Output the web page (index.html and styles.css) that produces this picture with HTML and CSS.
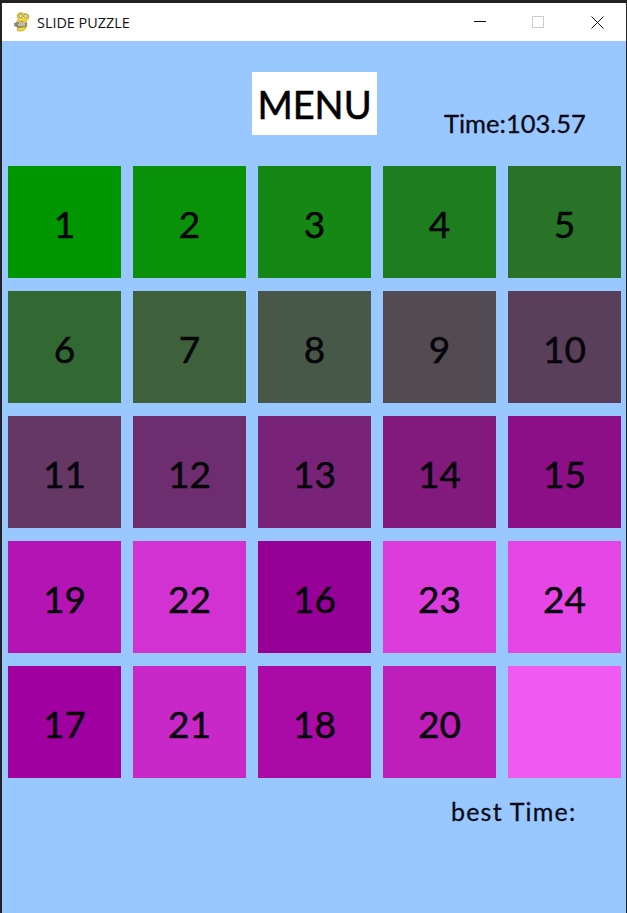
FILE: index.html
```html
<!DOCTYPE html>
<html lang="en">
<head>
<meta charset="utf-8">
<title>SLIDE PUZZLE</title>
<link rel="stylesheet" href="styles.css">
</head>
<body>
<div class="window">
  <header class="titlebar">
    <svg class="app-icon" width="18" height="20" viewBox="0 0 18 20">
      <path d="M6 1 C8 0 10 1 11 2 C13 1 16 2 16 5 C16 7 14 8 13 9 L14 12 C14 16 12 18 9 19 L5 19 C4 18 4 17 5 16 L4 12 C3 10 4 8 6 7 C4 6 3 3 6 1Z" fill="#f2d43a" stroke="#a98f1c" stroke-width=".6"/>
      <circle cx="7.5" cy="4" r="1.6" fill="#fff" stroke="#444" stroke-width=".5"/>
      <circle cx="12.5" cy="4" r="1.6" fill="#fff" stroke="#444" stroke-width=".5"/>
      <path d="M1 11 L9 9 L14 11 L13 15 L5 16 L1 14Z" fill="#77776a" opacity=".8"/>
      <path d="M6 11 H12 M5 13 H12" stroke="#eee" stroke-width="1"/>
    </svg>
    <span class="app-title">SLIDE PUZZLE</span>
    <div class="controls">
      <svg class="ctl" width="12" height="12" viewBox="0 0 12 12"><path d="M0 5.5H12" stroke="#111" stroke-width="1"/></svg>
      <svg class="ctl" width="12" height="12" viewBox="0 0 12 12"><rect x=".5" y=".5" width="11" height="11" fill="none" stroke="#ccc"/></svg>
      <svg class="ctl" width="13" height="13" viewBox="0 0 13 13"><path d="M.5 .5L12.5 12.5M12.5 .5L.5 12.5" stroke="#111" stroke-width="1"/></svg>
    </div>
  </header>
  <main class="game">
    <div class="top">
      <div class="menu">MENU</div>
      <div class="time">Time:103.57</div>
    </div>
    <div class="board">
      <div class="tile t1">1</div><div class="tile t2">2</div><div class="tile t3">3</div><div class="tile t4">4</div><div class="tile t5">5</div>
      <div class="tile t6">6</div><div class="tile t7">7</div><div class="tile t8">8</div><div class="tile t9">9</div><div class="tile t10">10</div>
      <div class="tile t11">11</div><div class="tile t12">12</div><div class="tile t13">13</div><div class="tile t14">14</div><div class="tile t15">15</div>
      <div class="tile t19">19</div><div class="tile t22">22</div><div class="tile t16">16</div><div class="tile t23">23</div><div class="tile t24">24</div>
      <div class="tile t17">17</div><div class="tile t21">21</div><div class="tile t18">18</div><div class="tile t20">20</div><div class="tile t25"></div>
    </div>
    <div class="best">best Time:</div>
  </main>
</div>
</body>
</html>
```
FILE: styles.css
```css
* { box-sizing: border-box; }
html, body { margin: 0; height: 100%; overflow: hidden; }
body { background: #222; font-family: "Comic Sans MS", "Lato", "Noto Sans", sans-serif; color: #0a0a14; }
.window { height: 913px; padding: 3px 1px 0 2px; display: flex; flex-direction: column; }
.titlebar { height: 38px; background: #fff; display: flex; align-items: center; padding-left: 11px; flex: none; }
.app-icon { flex: none; }
.app-title { font-family: "Open Sans", "Noto Sans", sans-serif; font-size: 14.4px; margin-left: 6px; color: #111; }
.controls { margin-left: auto; display: flex; align-items: center; }
.ctl { margin-right: 46px; }
.ctl:nth-child(2) { margin-right: 47px; }
.ctl:last-child { margin-right: 22px; }
.game { flex: 1; background: #99c7ff; padding: 31px 0 0 6px; }
.top { height: 94px; display: flex; align-items: flex-start; }
.menu { margin-left: 244px; width: 125px; height: 63px; background: #fff; color: #000; font-size: 38px; line-height: 64px; text-align: center; -webkit-text-stroke: 0.6px #000; }
.time { margin-left: 67px; margin-top: 33px; font-size: 25.5px; line-height: 36px; white-space: nowrap; -webkit-text-stroke: 0.3px #0a0a14; }
.board { display: grid; grid-template-columns: repeat(5, 113px); grid-auto-rows: 112px; gap: 13px 12px; }
.tile { display: flex; align-items: center; justify-content: center; padding-top: 3px; font-size: 37px; color: #05050a; -webkit-text-stroke: 0.5px #05050a; }
.best { margin: 16px 0 0 443px; font-size: 25px; line-height: 34px; letter-spacing: 1.2px; white-space: nowrap; -webkit-text-stroke: 0.3px #0a0a14; }
.t1 { background: rgb(0,150,0); }
.t2 { background: rgb(10,145,10); }
.t3 { background: rgb(20,135,20); }
.t4 { background: rgb(30,125,30); }
.t5 { background: rgb(40,115,40); }
.t6 { background: rgb(50,105,50); }
.t7 { background: rgb(62,97,60); }
.t8 { background: rgb(72,88,72); }
.t9 { background: rgb(82,75,82); }
.t10 { background: rgb(90,63,90); }
.t11 { background: rgb(100,55,100); }
.t12 { background: rgb(110,45,110); }
.t13 { background: rgb(120,35,120); }
.t14 { background: rgb(130,25,125); }
.t15 { background: rgb(140,15,135); }
.t16 { background: rgb(150,0,150); }
.t17 { background: rgb(160,0,160); }
.t18 { background: rgb(170,10,165); }
.t19 { background: rgb(180,20,180); }
.t20 { background: rgb(190,30,185); }
.t21 { background: rgb(200,40,200); }
.t22 { background: rgb(210,50,210); }
.t23 { background: rgb(220,60,220); }
.t24 { background: rgb(230,70,230); }
.t25 { background: rgb(240,90,240); }
```
